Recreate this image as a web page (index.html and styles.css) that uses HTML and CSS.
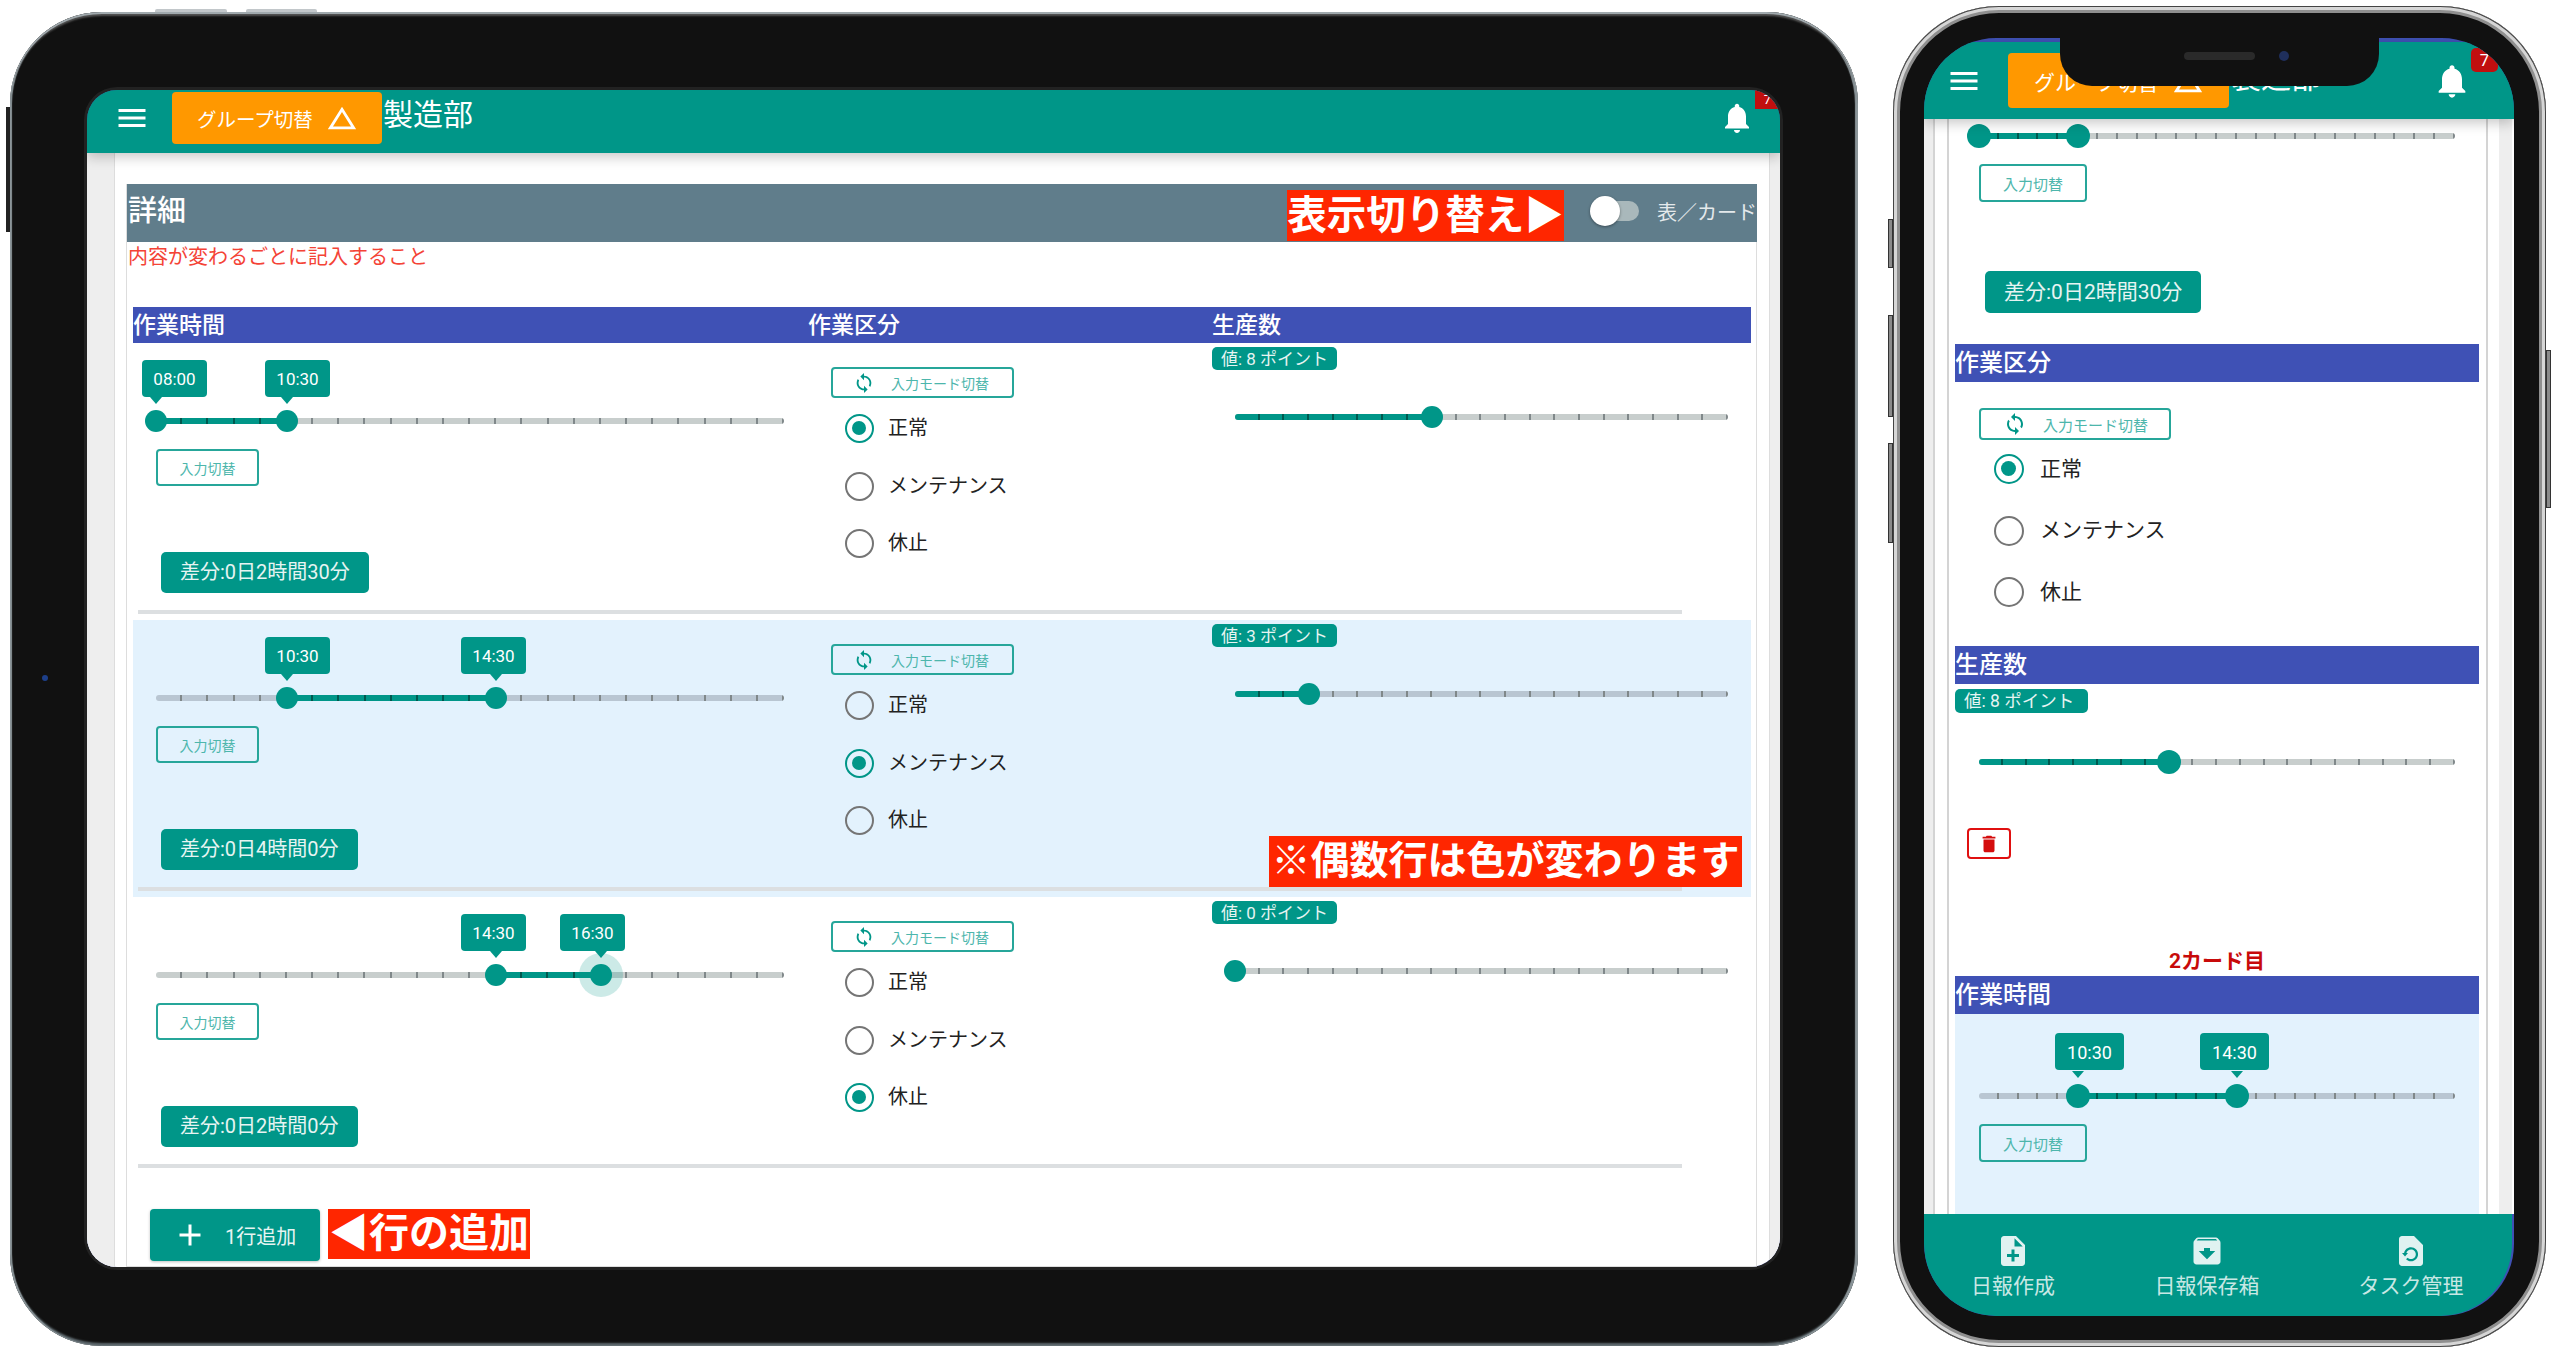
FILE: index.html
```html
<!DOCTYPE html>
<html lang="ja">
<head>
    <meta charset="UTF-8">
    <meta name="viewport" content="width=device-width, initial-scale=1.0">
    <title>日報 詳細</title>
    <link rel="stylesheet" href="styles.css">
</head>
<body>
    <svg class="icon-defs" width="0" height="0">
        <symbol id="i-menu" viewBox="0 0 24 24"><path d="M3 18h18v-2H3v2zm0-5h18v-2H3v2zm0-7v2h18V6H3z"/></symbol>
        <symbol id="i-triangle" viewBox="0 0 24 24"><path d="M12 7.77L18.39 18H5.61L12 7.77M12 4L2 20h20L12 4z"/></symbol>
        <symbol id="i-bell" viewBox="0 0 24 24"><path d="M12 22c1.1 0 2-.9 2-2h-4c0 1.1.89 2 2 2zm6-6v-5c0-3.07-1.64-5.64-4.5-6.32V4c0-.83-.67-1.5-1.5-1.5s-1.5.67-1.5 1.5v.68C7.63 5.36 6 7.92 6 11v5l-2 2v1h16v-1l-2-2z"/></symbol>
        <symbol id="i-sync" viewBox="0 0 24 24"><path d="M12 4V1L8 5l4 4V6c3.31 0 6 2.69 6 6 0 1.01-.25 1.97-.7 2.8l1.46 1.46C19.54 15.03 20 13.57 20 12c0-4.42-3.58-8-8-8zm0 14c-3.31 0-6-2.69-6-6 0-1.01.25-1.97.7-2.8L5.24 7.74C4.46 8.97 4 10.43 4 12c0 4.42 3.58 8 8 8v3l4-4-4-4v3z"/></symbol>
        <symbol id="i-plus" viewBox="0 0 24 24"><path d="M19 13h-6v6h-2v-6H5v-2h6V5h2v6h6v2z"/></symbol>
        <symbol id="i-delete" viewBox="0 0 24 24"><path d="M6 19c0 1.1.9 2 2 2h8c1.1 0 2-.9 2-2V7H6v12zM19 4h-3.5l-1-1h-5l-1 1H5v2h14V4z"/></symbol>
        <symbol id="i-note-add" viewBox="0 0 24 24"><path d="M14 2H6c-1.1 0-1.99.9-1.99 2L4 20c0 1.1.89 2 1.99 2H18c1.1 0 2-.9 2-2V8l-6-6zm2 14h-3v3h-2v-3H8v-2h3v-3h2v3h3v2zm-3-7V3.5L18.5 9H13z"/></symbol>
        <symbol id="i-archive" viewBox="0 0 24 24"><path d="M20.54 5.23l-1.39-1.68C18.88 3.21 18.47 3 18 3H6c-.47 0-.88.21-1.16.55L3.46 5.23C3.17 5.57 3 6.02 3 6.5V19c0 1.1.9 2 2 2h14c1.1 0 2-.9 2-2V6.5c0-.48-.17-.93-.46-1.27zM12 17.5L6.5 12H10v-2h4v2h3.5L12 17.5zM5.12 5l.81-1h12l.94 1H5.12z"/></symbol>
        <symbol id="i-file-restore" viewBox="0 0 24 24"><path fill-rule="evenodd" d="M6 2h8l6 6v12c0 1.1-.9 2-2 2H6c-1.1 0-2-.9-2-2V4c0-1.1.9-2 2-2zm6 7.5c-2.3 0-4.2 1.6-4.6 3.8H6l2 2.3 2-2.3H8.9c.4-1.3 1.6-2.3 3.1-2.3 1.8 0 3.2 1.4 3.2 3.2s-1.4 3.2-3.2 3.2c-.9 0-1.7-.4-2.3-.9l-1 1c.8.8 2 1.4 3.3 1.4 2.6 0 4.7-2.1 4.7-4.7s-2.1-4.7-4.7-4.7z"/></symbol>
    </svg>

    <div class="stage">
        <!-- tablet -->
        <div class="tablet">
            <i class="tablet-key key-a"></i>
            <i class="tablet-key key-b"></i>
            <i class="tablet-side"></i>
            <i class="tablet-camera"></i>

            <div class="screen tablet-screen">
                <header class="appbar">
                    <svg class="menu-icon"><use href="#i-menu"/></svg>
                    <button class="group-btn"><span>グループ切替</span><svg class="triangle-icon"><use href="#i-triangle"/></svg></button>
                    <span class="app-title">製造部</span>
                    <svg class="bell-icon"><use href="#i-bell"/></svg>
                    <span class="badge">7</span>
                </header>

                <main class="panel">
                    <section class="card">
                        <div class="card-head">
                            <h2>詳細</h2>
                            <div class="view-toggle">
                                <span class="toggle"><span class="toggle-knob"></span></span>
                                <span>表／カード</span>
                            </div>
                        </div>
                        <p class="note">内容が変わるごとに記入すること</p>

                        <div class="table">
                            <div class="table-head">
                                <div>作業時間</div>
                                <div>作業区分</div>
                                <div>生産数</div>
                            </div>

                            <div class="row">
                                <div class="row-cols">
                                    <div class="col-time">
                                        <div class="slider">
                                            <div class="track"></div>
                                            <div class="fill" style="left: 0; width: 20.83%"></div>
                                            <span class="tip" style="left: -14px">08:00</span>
                                            <span class="tip" style="left: 109px">10:30</span>
                                            <span class="thumb pin" style="left: 0"></span>
                                            <span class="thumb pin" style="left: 20.83%"></span>
                                        </div>
                                        <button class="outline-btn input-btn">入力切替</button>
                                        <div class="diff">差分:0日2時間30分</div>
                                    </div>
                                    <div class="col-kind">
                                        <button class="outline-btn mode-btn"><svg class="sync-icon"><use href="#i-sync"/></svg>入力モード切替</button>
                                        <div class="radios">
                                            <label class="radio"><span class="radio-mark on"></span>正常</label>
                                            <label class="radio"><span class="radio-mark"></span>メンテナンス</label>
                                            <label class="radio"><span class="radio-mark"></span>休止</label>
                                        </div>
                                    </div>
                                    <div class="col-count">
                                        <span class="value-chip">値: 8 ポイント</span>
                                        <div class="slider points">
                                            <div class="track"></div>
                                            <div class="fill" style="left: 0; width: 40%"></div>
                                            <span class="thumb" style="left: 40%"></span>
                                        </div>
                                    </div>
                                </div>
                                <div class="row-line"></div>
                            </div>

                            <div class="row even">
                                <div class="row-cols">
                                    <div class="col-time">
                                        <div class="slider">
                                            <div class="track"></div>
                                            <div class="fill" style="left: 20.83%; width: 33.33%"></div>
                                            <span class="tip" style="left: 109px">10:30</span>
                                            <span class="tip" style="left: 305px">14:30</span>
                                            <span class="thumb pin" style="left: 20.83%"></span>
                                            <span class="thumb pin" style="left: 54.17%"></span>
                                        </div>
                                        <button class="outline-btn input-btn">入力切替</button>
                                        <div class="diff">差分:0日4時間0分</div>
                                    </div>
                                    <div class="col-kind">
                                        <button class="outline-btn mode-btn"><svg class="sync-icon"><use href="#i-sync"/></svg>入力モード切替</button>
                                        <div class="radios">
                                            <label class="radio"><span class="radio-mark"></span>正常</label>
                                            <label class="radio"><span class="radio-mark on"></span>メンテナンス</label>
                                            <label class="radio"><span class="radio-mark"></span>休止</label>
                                        </div>
                                    </div>
                                    <div class="col-count">
                                        <span class="value-chip">値: 3 ポイント</span>
                                        <div class="slider points">
                                            <div class="track"></div>
                                            <div class="fill" style="left: 0; width: 15%"></div>
                                            <span class="thumb" style="left: 15%"></span>
                                        </div>
                                    </div>
                                </div>
                                <div class="row-line"></div>
                            </div>

                            <div class="row">
                                <div class="row-cols">
                                    <div class="col-time">
                                        <div class="slider">
                                            <div class="track"></div>
                                            <div class="fill" style="left: 54.17%; width: 16.67%"></div>
                                            <span class="tip" style="left: 305px">14:30</span>
                                            <span class="tip" style="left: 404px">16:30</span>
                                            <span class="thumb pin" style="left: 54.17%"></span>
                                            <span class="thumb pin focus" style="left: 70.83%"></span>
                                        </div>
                                        <button class="outline-btn input-btn">入力切替</button>
                                        <div class="diff">差分:0日2時間0分</div>
                                    </div>
                                    <div class="col-kind">
                                        <button class="outline-btn mode-btn"><svg class="sync-icon"><use href="#i-sync"/></svg>入力モード切替</button>
                                        <div class="radios">
                                            <label class="radio"><span class="radio-mark"></span>正常</label>
                                            <label class="radio"><span class="radio-mark"></span>メンテナンス</label>
                                            <label class="radio"><span class="radio-mark on"></span>休止</label>
                                        </div>
                                    </div>
                                    <div class="col-count">
                                        <span class="value-chip">値: 0 ポイント</span>
                                        <div class="slider points">
                                            <div class="track"></div>
                                            <span class="thumb" style="left: 0"></span>
                                        </div>
                                    </div>
                                </div>
                                <div class="row-line"></div>
                            </div>

                            <button class="add-btn"><svg class="plus-icon"><use href="#i-plus"/></svg>1行追加</button>
                        </div>
                    </section>
                </main>

                <!-- red callouts on top of the screenshot -->
                <div class="callout callout-toggle">表示切り替え▶</div>
                <div class="callout callout-even">※偶数行は色が変わります</div>
                <div class="callout callout-add">◀行の追加</div>
            </div>
        </div>

        <!-- phone -->
        <div class="phone">
            <i class="phone-key key-1"></i>
            <i class="phone-key key-2"></i>
            <i class="phone-key key-3"></i>
            <i class="phone-key key-4"></i>

            <div class="screen phone-screen">
                <div class="notch"><span class="speaker"></span><span class="camera"></span></div>

                <header class="appbar">
                    <svg class="menu-icon"><use href="#i-menu"/></svg>
                    <button class="group-btn"><span>グループ切替</span><svg class="triangle-icon"><use href="#i-triangle"/></svg></button>
                    <span class="app-title">製造部</span>
                    <svg class="bell-icon"><use href="#i-bell"/></svg>
                    <span class="badge">7</span>
                </header>

                <main class="panel">
                    <section class="phone-card">
                        <div class="slider first">
                            <div class="track"></div>
                            <div class="fill" style="left: 0; width: 20.83%"></div>
                            <span class="thumb" style="left: 0"></span>
                            <span class="thumb" style="left: 20.83%"></span>
                        </div>
                        <button class="outline-btn input-btn">入力切替</button>
                        <div class="diff">差分:0日2時間30分</div>

                        <div class="card-label kind-label">作業区分</div>
                        <button class="outline-btn mode-btn"><svg class="sync-icon"><use href="#i-sync"/></svg>入力モード切替</button>
                        <div class="radios">
                            <label class="radio"><span class="radio-mark on"></span>正常</label>
                            <label class="radio"><span class="radio-mark"></span>メンテナンス</label>
                            <label class="radio"><span class="radio-mark"></span>休止</label>
                        </div>

                        <div class="card-label count-label">生産数</div>
                        <span class="value-chip">値: 8 ポイント</span>
                        <div class="slider points">
                            <div class="track"></div>
                            <div class="fill" style="left: 0; width: 40%"></div>
                            <span class="thumb" style="left: 40%"></span>
                        </div>
                        <button class="delete-btn"><svg class="delete-icon"><use href="#i-delete"/></svg></button>

                        <div class="card-no">2カード目</div>
                        <div class="card-label">作業時間</div>
                        <div class="even card-even">
                            <div class="slider">
                                <div class="track"></div>
                                <div class="fill" style="left: 20.83%; width: 33.33%"></div>
                                <span class="tip" style="left: 76px">10:30</span>
                                <span class="tip" style="left: 221px">14:30</span>
                                <span class="thumb pin" style="left: 20.83%"></span>
                                <span class="thumb pin" style="left: 54.17%"></span>
                            </div>
                            <button class="outline-btn input-btn">入力切替</button>
                        </div>
                    </section>
                </main>

                <nav class="bottom-nav">
                    <a class="nav-item"><svg class="nav-icon"><use href="#i-note-add"/></svg>日報作成</a>
                    <a class="nav-item"><svg class="nav-icon"><use href="#i-archive"/></svg>日報保存箱</a>
                    <a class="nav-item"><svg class="nav-icon"><use href="#i-file-restore"/></svg>タスク管理</a>
                </nav>
            </div>
        </div>
    </div>
</body>
</html>
```

FILE: styles.css
```css
html, body {
    margin: 0;
    padding: 0;
    background-color: #fff;
}

body {
    font-family: Roboto, "Noto Sans CJK JP", sans-serif;
    color: #222;
    width: 2560px;
    height: 1358px;
    overflow: hidden;
}

button {
    font-family: inherit;
    margin: 0;
    padding: 0;
    border: none;
}

h2, p {
    margin: 0;
}

svg {
    display: block;
    fill: currentColor;
    flex: none;
}

.icon-defs {
    position: absolute;
}

.stage {
    display: flex;
    align-items: flex-start;
    gap: 35px;
    padding-left: 10px;
}

/* device frames */
.tablet {
    position: relative;
    flex: none;
    box-sizing: border-box;
    width: 1848px;
    height: 1334px;
    margin-top: 12px;
    padding: 78px 78px 79px 77px;
    background-color: #111;
    border-radius: 92px;
    box-shadow: inset 0 2px 0 #a0a9ad, inset 0 6px 2px -2px #555, inset 2px 0 1px #8b9599, inset -3px 0 1px #8b9599, inset 0 -3px 2px #5d686d;
}

.tablet-key {
    position: absolute;
    top: -3px;
    height: 3px;
    background-color: #c2c7ca;
    border-radius: 2px 2px 0 0;
}

.key-a { left: 145px; width: 72px; }
.key-b { left: 236px; width: 71px; }

.tablet-side {
    position: absolute;
    left: -4px;
    top: 95px;
    width: 4px;
    height: 125px;
    background-color: #222;
}

.tablet-camera {
    position: absolute;
    left: 32px;
    top: 663px;
    width: 6px;
    height: 6px;
    border-radius: 50%;
    background-color: #1d3f8a;
}

.phone {
    position: relative;
    flex: none;
    box-sizing: border-box;
    width: 653px;
    height: 1341px;
    margin-top: 6px;
    padding: 32px 32px 31px 31px;
    background-color: #111;
    border-radius: 106px;
    box-shadow: inset 0 0 0 1px #444, inset 0 0 0 4px #d6d6d6, inset 0 0 0 7px #8f8f8f;
}

.phone-key {
    position: absolute;
    left: -5px;
    width: 5px;
    background-color: #8a8a8a;
    border: 1px solid #333;
    box-sizing: border-box;
}

.key-1 { top: 213px; height: 49px; }
.key-2 { top: 309px; height: 102px; }
.key-3 { top: 437px; height: 100px; }
.key-4 { left: 653px; top: 344px; height: 158px; }

.screen {
    position: relative;
    display: flex;
    flex-direction: column;
    height: 100%;
    overflow: hidden;
    background-color: #3f51b5;
}

.tablet-screen {
    border-radius: 30px;
    box-shadow: 0 0 0 3px #222;
}

.phone-screen {
    border-radius: 72px;
    padding-top: 4px;
    box-sizing: border-box;
}

.notch {
    position: absolute;
    top: 0;
    left: 136px;
    width: 319px;
    height: 48px;
    background-color: #111;
    border-radius: 0 0 32px 32px;
    z-index: 5;
}

.speaker {
    position: absolute;
    left: 124px;
    top: 14px;
    width: 71px;
    height: 8px;
    background-color: #2a2a2a;
    border-radius: 4px;
}

.camera {
    position: absolute;
    left: 219px;
    top: 13px;
    width: 10px;
    height: 10px;
    background-color: #1f2f5c;
    border-radius: 50%;
}

/* app bar */
.appbar {
    position: relative;
    z-index: 3;
    flex: none;
    display: flex;
    align-items: center;
    box-sizing: border-box;
    background-color: #009688;
    color: #fff;
    box-shadow: 0 4px 12px rgba(0, 0, 0, 0.22);
}

.tablet-screen .appbar {
    height: 63px;
    padding: 0 25px 7px 27px;
}

.phone-screen .appbar {
    height: 77px;
    padding: 0 42px 0 22px;
}

.menu-icon {
    width: 36px;
    height: 36px;
}

.group-btn {
    display: flex;
    align-items: center;
    box-sizing: border-box;
    background-color: #ff9800;
    color: #fff;
    border-radius: 4px;
}

.tablet-screen .group-btn {
    width: 210px;
    height: 52px;
    margin-left: 22px;
    padding-left: 25px;
    font-size: 19.5px;
    gap: 12px;
}

.phone-screen .group-btn {
    width: 221px;
    height: 55px;
    margin-left: 26px;
    padding-left: 26px;
    font-size: 21px;
    gap: 12px;
}

.triangle-icon {
    width: 34px;
    height: 34px;
}

.app-title {
    font-size: 30px;
    line-height: 40px;
    margin-right: auto;
}

.tablet-screen .app-title {
    margin-left: 1px;
    margin-bottom: 6px;
}

.phone-screen .app-title {
    margin-left: 2px;
    margin-bottom: 6px;
}

.bell-icon {
    width: 36px;
    height: 36px;
}

.phone-screen .bell-icon {
    width: 40px;
    height: 40px;
}

.badge {
    position: absolute;
    background-color: #c10f0f;
    color: #fff;
    text-align: center;
}

.tablet-screen .badge {
    top: 0;
    right: 0;
    width: 25px;
    height: 19px;
    font-size: 13px;
    line-height: 19px;
}

.phone-screen .badge {
    top: 6px;
    right: 16px;
    width: 27px;
    height: 24px;
    font-size: 17px;
    line-height: 24px;
    border-radius: 5px;
}

/* page behind the card */
.panel {
    flex: 1;
    min-height: 0;
    box-sizing: border-box;
    background-color: #fff;
    background-repeat: no-repeat;
}

.tablet-screen .panel {
    margin: 0;
    padding: 31px 23px 0 39px;
    background-image:
        linear-gradient(#eee, #eee),
        linear-gradient(#ddd, #ddd),
        linear-gradient(#eee, #eee),
        linear-gradient(#ddd, #ddd);
    background-size: 27px 100%, 1px 100%, 10px 100%, 1px 100%;
    background-position: 0 0, 27px 0, right 0 top 0, right 10px top 0;
}

.card {
    height: 100%;
    box-sizing: border-box;
    border: 1px solid #ddd;
    border-top: none;
}

.card-head {
    display: flex;
    align-items: center;
    justify-content: space-between;
    height: 58px;
    margin-right: -1px;
    background-color: #607d8b;
    color: #fff;
    padding: 0 0 0 1px;
}

.card-head h2 {
    font-size: 29px;
    font-weight: 500;
    line-height: 46px;
    margin-bottom: 5px;
}

.view-toggle {
    display: flex;
    align-items: center;
    gap: 18px;
    font-size: 20px;
    color: #e4e9eb;
    margin-bottom: 4px;
}

.toggle {
    position: relative;
    display: block;
    width: 34px;
    height: 20px;
    margin-left: 15px;
    background-color: #a9b8bb;
    border-radius: 0 10px 10px 0;
}

.toggle-knob {
    position: absolute;
    left: -15px;
    top: -5px;
    width: 30px;
    height: 30px;
    border-radius: 50%;
    background-color: #fff;
    box-shadow: 0 1px 3px rgba(0, 0, 0, 0.4);
}

.note {
    height: 65px;
    padding-left: 1px;
    font-size: 20px;
    line-height: 30px;
    color: #f44336;
}

.table {
    margin: 0 5px 0 6px;
}

.table-head {
    display: grid;
    grid-template-columns: 675px 404px 1fr;
    height: 36px;
    background-color: #3f51b5;
    color: #fff;
    font-size: 23px;
    font-weight: 500;
    line-height: 38px;
}

/* rows */
.row {
    height: 277px;
    box-sizing: border-box;
    padding-top: 1px;
}

.row-cols {
    display: grid;
    grid-template-columns: 675px 404px 1fr;
    height: 266px;
}

.row-line {
    width: 1544px;
    height: 4px;
    margin-left: 5px;
    background-color: #dcdfe1;
}

.even {
    background-color: #e3f2fd;
}

.col-time {
    padding: 66px 0 0 23px;
}

.col-kind {
    padding: 23px 0 0 23px;
}

.col-count {
    padding: 3px 0 0 0;
}

/* sliders */
.slider {
    --track: #c8cecd;
    --step: 26.17px;
    position: relative;
    width: 628px;
    height: 22px;
}

.even .slider {
    --track: #b9c6d2;
}

.slider.points {
    --step: 24.65px;
    width: 493px;
    margin: 36px 0 0 23px;
}

.track, .fill {
    position: absolute;
    top: 8px;
    height: 6px;
    border-radius: 3px;
}

.track {
    left: 0;
    right: 0;
    background-color: var(--track);
    background-image: repeating-linear-gradient(90deg, transparent 0, transparent calc(var(--step) - 2px), #80888a calc(var(--step) - 2px), #80888a var(--step));
}

.fill {
    background-color: #009688;
    background-image: repeating-linear-gradient(90deg, transparent 0, transparent calc(var(--step) - 2px), #00594f calc(var(--step) - 2px), #00594f var(--step));
}

.thumb {
    position: absolute;
    top: 0;
    width: 22px;
    height: 22px;
    margin-left: -11px;
    border-radius: 50%;
    background-color: #009688;
}

.thumb.pin::before {
    content: "";
    position: absolute;
    left: 5px;
    top: -13px;
    border-style: solid;
    border-width: 7px 6px 0;
    border-color: #009688 transparent transparent;
}

.thumb.focus {
    box-shadow: 0 0 0 11px rgba(0, 150, 136, 0.2);
}

.tip {
    position: absolute;
    top: -50px;
    width: 65px;
    height: 37px;
    border-radius: 4px;
    background-color: #009688;
    color: #fff;
    font-size: 17px;
    line-height: 39px;
    text-align: center;
}

/* buttons and chips */
.outline-btn {
    display: flex;
    align-items: center;
    box-sizing: border-box;
    background-color: transparent;
    border: 2px solid #26a69a;
    border-radius: 4px;
    color: #4db6ac;
    font-size: 14px;
}

.input-btn {
    justify-content: center;
    width: 103px;
    height: 37px;
    margin-top: 17px;
}

.mode-btn {
    width: 183px;
    height: 31px;
    padding-left: 20px;
}

.sync-icon {
    width: 22px;
    height: 22px;
    margin-right: 16px;
    color: #009688;
}

.diff {
    display: table;
    box-sizing: border-box;
    height: 41px;
    margin: 66px 0 0 5px;
    padding: 0 19px;
    background-color: #009688;
    border-radius: 5px;
    color: #e6f4f2;
    font-size: 20px;
    line-height: 41px;
}

.value-chip {
    display: inline-block;
    height: 23px;
    padding: 0 9px;
    background-color: #009688;
    border-radius: 5px;
    color: #e6f4f2;
    font-size: 17px;
    line-height: 25px;
    vertical-align: top;
}

.radios {
    display: flex;
    flex-direction: column;
    gap: 28.5px;
    margin: 16px 0 0 14px;
}

.radio {
    display: flex;
    align-items: center;
    gap: 14px;
    height: 29px;
    font-size: 20px;
    line-height: 29px;
}

.radio-mark {
    position: relative;
    flex: none;
    box-sizing: border-box;
    width: 29px;
    height: 29px;
    border: 2.5px solid #757575;
    border-radius: 50%;
}

.radio-mark.on {
    border-color: #009688;
}

.radio-mark.on::after {
    content: "";
    position: absolute;
    left: 5px;
    top: 5px;
    width: 14px;
    height: 14px;
    border-radius: 50%;
    background-color: #009688;
}

.add-btn {
    display: flex;
    align-items: center;
    width: 170px;
    height: 52px;
    margin: 35px 0 0 17px;
    padding-left: 22px;
    background-color: #009688;
    border-radius: 4px;
    color: #e6f4f2;
    font-size: 20px;
    box-shadow: 0 1px 3px rgba(0, 0, 0, 0.25);
}

.plus-icon {
    width: 36px;
    height: 36px;
    margin-right: 17px;
    color: #fff;
}

/* red callouts */
.callout {
    position: absolute;
    z-index: 4;
    background-color: #ff2600;
    color: #fff;
    font-weight: 700;
    white-space: nowrap;
    text-align: center;
}

.callout-toggle {
    left: 1200px;
    top: 100px;
    width: 277px;
    height: 51px;
    font-size: 39.5px;
    line-height: 51px;
}

.callout-even {
    left: 1182px;
    top: 746px;
    width: 473px;
    height: 51px;
    font-size: 39px;
    line-height: 51px;
}

.callout-add {
    left: 241px;
    top: 1119px;
    width: 202px;
    height: 50px;
    font-size: 40px;
    line-height: 50px;
}

/* phone contents */
.phone-screen .panel {
    overflow: hidden;
    padding: 0 35px 0 31px;
    background-image:
        linear-gradient(#eee, #eee),
        linear-gradient(#d4d4d4, #d4d4d4),
        linear-gradient(#d4d4d4, #d4d4d4),
        linear-gradient(#d4d4d4, #d4d4d4),
        linear-gradient(#eee, #eee);
    background-size: 9px 100%, 2px 100%, 2px 100%, 2px 100%, 13px 100%;
    background-position: 0 0, 9px 0, 23px 0, 562px 0, 575px 0;
}

.phone-card .slider {
    --step: 19.83px;
    width: 476px;
    height: 24px;
    margin-left: 24px;
}

.phone-card .slider.points {
    --step: 23.8px;
    margin-top: 37px;
}

.phone-card .first {
    margin-top: 5px;
}

.phone-card .track,
.phone-card .fill {
    top: 9px;
}

.phone-card .thumb {
    width: 24px;
    height: 24px;
    margin-left: -12px;
}

.phone-card .thumb.pin::before {
    left: 6px;
    top: -13px;
}

.phone-card .tip {
    top: -51px;
    width: 69px;
    font-size: 18px;
}

.phone-card .outline-btn {
    font-size: 15px;
    margin-left: 24px;
}

.phone-card .input-btn {
    width: 108px;
    height: 38px;
    margin-top: 16px;
}

.phone-card .diff {
    height: 42px;
    margin: 69px 0 0 30px;
    padding: 0 19px;
    font-size: 21px;
    line-height: 42px;
}

.card-label {
    height: 38px;
    background-color: #3f51b5;
    color: #fff;
    font-size: 24px;
    font-weight: 500;
    line-height: 38px;
}

.kind-label {
    margin-top: 31px;
}

.count-label {
    margin-top: 39px;
}

.phone-card .mode-btn {
    width: 192px;
    height: 32px;
    margin-top: 26px;
    padding-left: 22px;
    white-space: nowrap;
}

.phone-card .sync-icon {
    width: 24px;
    height: 24px;
    margin-right: 16px;
}

.phone-card .radios {
    gap: 31.5px;
    margin: 14px 0 0 39px;
}

.phone-card .radio {
    height: 30px;
    font-size: 21px;
    gap: 16px;
}

.phone-card .radio-mark {
    width: 30px;
    height: 30px;
}

.phone-card .radio-mark.on::after {
    width: 15px;
    height: 15px;
}

.phone-card .value-chip {
    display: block;
    width: 133px;
    box-sizing: border-box;
    height: 24px;
    margin-top: 5px;
    padding: 0 9px;
    font-size: 17.5px;
    line-height: 24px;
    white-space: nowrap;
}

.delete-btn {
    display: flex;
    align-items: center;
    justify-content: center;
    box-sizing: border-box;
    width: 44px;
    height: 31px;
    margin: 54px 0 0 12px;
    background-color: #fff;
    border: 2px solid #e01010;
    border-radius: 4px;
    color: #d40d0d;
}

.delete-icon {
    width: 22px;
    height: 22px;
}

.card-no {
    height: 30px;
    margin-top: 87px;
    color: #c80a0a;
    font-size: 21px;
    font-weight: 700;
    line-height: 30px;
    text-align: center;
}

.card-even {
    height: 220px;
    padding-top: 70px;
    box-sizing: border-box;
}

.bottom-nav {
    flex: none;
    display: grid;
    grid-template-columns: 178px 210px 198px;
    box-sizing: border-box;
    width: 588px;
    height: 102px;
    padding-top: 19px;
    background-color: #009688;
    border-radius: 0 0 72px 72px;
    position: relative;
    z-index: 3;
}

.nav-item {
    display: flex;
    flex-direction: column;
    align-items: center;
    gap: 2px;
    color: rgba(255, 255, 255, 0.8);
    font-size: 21px;
    line-height: 30px;
}

.nav-icon {
    width: 36px;
    height: 36px;
    color: #e0f2f1;
}
```
